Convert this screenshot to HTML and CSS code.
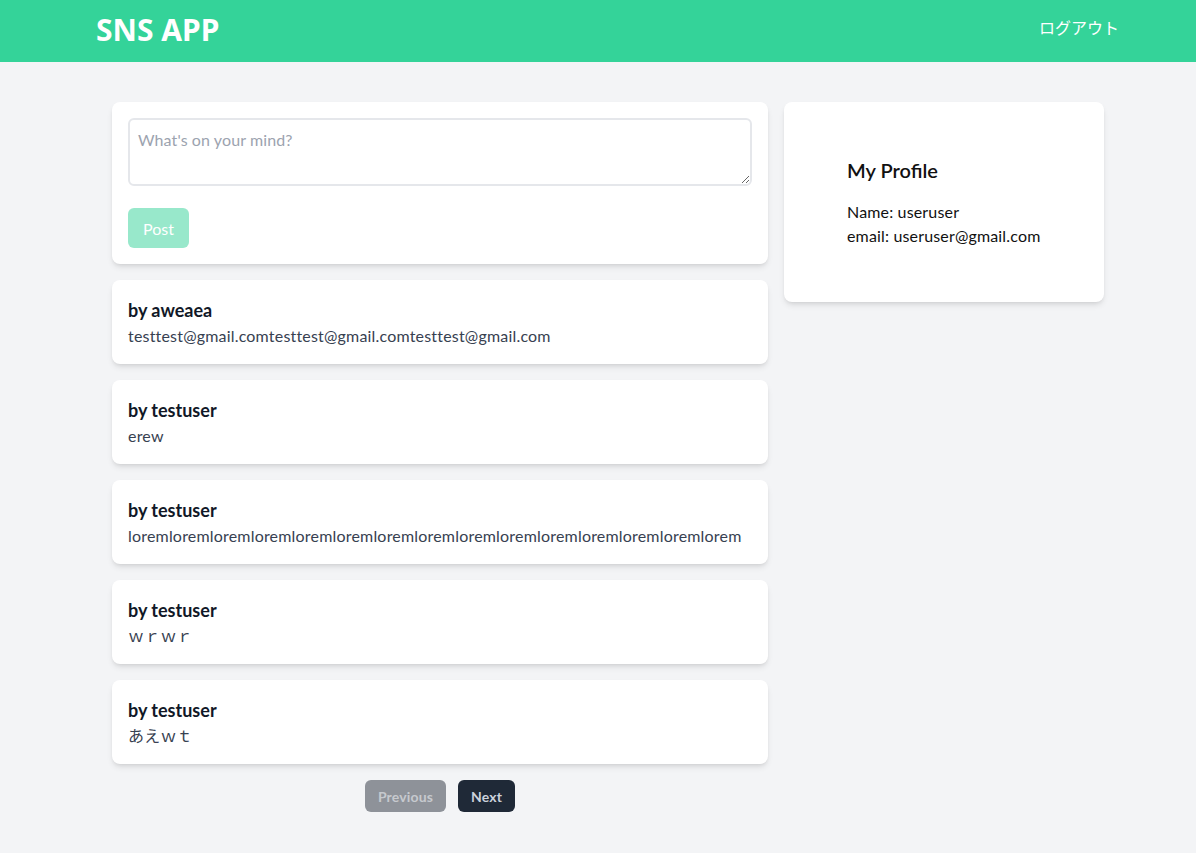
FILE: index.html
```html
<!DOCTYPE html>
<html lang="ja">
<head>
<meta charset="utf-8">
<title>SNS APP</title>
<link rel="stylesheet" href="styles.css">
</head>
<body>
<header class="topbar">
  <h1 class="brand">SNS APP</h1>
  <a class="logout" href="#">ログアウト</a>
</header>
<main class="layout">
  <section class="feed">
    <form class="card composer">
      <textarea class="composer-input" placeholder="What's on your mind?"></textarea>
      <button type="button" class="post-btn">Post</button>
    </form>
    <article class="card post">
      <h2 class="post-author">by aweaea</h2>
      <p class="post-body">testtest@gmail.comtesttest@gmail.comtesttest@gmail.com</p>
    </article>
    <article class="card post">
      <h2 class="post-author">by testuser</h2>
      <p class="post-body">erew</p>
    </article>
    <article class="card post">
      <h2 class="post-author">by testuser</h2>
      <p class="post-body">loremloremloremloremloremloremloremloremloremloremloremloremloremloremlorem</p>
    </article>
    <article class="card post">
      <h2 class="post-author">by testuser</h2>
      <p class="post-body">ｗｒｗｒ</p>
    </article>
    <article class="card post">
      <h2 class="post-author">by testuser</h2>
      <p class="post-body">あえｗｔ</p>
    </article>
    <nav class="pager">
      <button type="button" class="pager-btn prev">Previous</button>
      <button type="button" class="pager-btn next">Next</button>
    </nav>
  </section>
  <aside class="card profile">
    <h2 class="profile-title">My Profile</h2>
    <p class="profile-line">Name: useruser</p>
    <p class="profile-line">email: useruser@gmail.com</p>
  </aside>
</main>
</body>
</html>
```
FILE: styles.css
```css
* { box-sizing: border-box; }
body {
  margin: 0;
  background: #f3f4f6;
  font-family: "Segoe UI", Lato, "Noto Sans CJK JP", sans-serif;
  color: #111827;
  min-height: 853px;
}
.topbar {
  height: 62px;
  background: #34d399;
  display: flex;
  align-items: center;
  justify-content: space-between;
  padding: 0 77px 0 96px;
}
.brand {
  margin: 0;
  color: #fff;
  font-family: "Noto Sans", sans-serif;
  font-size: 30px;
  font-weight: 700;
  line-height: 36px;
  position: relative;
  top: -1px;
}
.logout {
  color: #fff;
  text-decoration: none;
  font-family: "Noto Sans CJK JP", sans-serif;
  font-size: 16px;
  position: relative;
  top: -4px;
}
.layout {
  display: grid;
  grid-template-columns: 656px 320px;
  gap: 16px;
  align-items: start;
  padding: 40px 0 0 112px;
}
.feed {
  display: flex;
  flex-direction: column;
  gap: 16px;
}
.card {
  background: #fff;
  border-radius: 8px;
  box-shadow: 0 4px 6px -1px rgba(0,0,0,0.1), 0 2px 4px -2px rgba(0,0,0,0.1);
}
.composer {
  padding: 16px;
  display: flex;
  flex-direction: column;
  align-items: flex-start;
  margin: 0;
  height: 162px;
}
.composer-input {
  display: block;
  width: 100%;
  height: 68px;
  border: 2px solid #e5e7eb;
  border-radius: 6px;
  padding: 8px;
  font-family: inherit;
  font-size: 16px;
  line-height: 24px;
  letter-spacing: 0.1px;
  color: #111827;
  resize: vertical;
  outline: none;
}
.composer-input::placeholder { color: #9ca3af; }
.post-btn {
  margin-top: 22px;
  height: 40px;
  padding: 0 15px;
  border: 0;
  border-radius: 6px;
  background: #34d399;
  opacity: 0.5;
  color: #fff;
  font-family: inherit;
  font-size: 16px;
}
.post {
  padding: 16px;
  height: 84px;
}
.post-author {
  margin: 0;
  font-size: 18px;
  line-height: 28px;
  font-weight: 700;
  color: #111827;
}
.post-body {
  margin: 0;
  font-size: 16px;
  line-height: 24px;
  letter-spacing: 0.19px;
  color: #374151;
}
.pager {
  display: flex;
  justify-content: center;
  gap: 12px;
}
.pager-btn {
  height: 32px;
  padding: 0 13px;
  border: 0;
  border-radius: 6px;
  font-family: inherit;
  font-size: 14px;
  font-weight: 700;
  letter-spacing: 0.15px;
}
.prev { background: #8e9299; color: #c6c9ce; }
.next { background: #1f2937; color: #cbd2dc; }
.profile {
  height: 200px;
  padding: 54px 16px 0 63px;
}
.profile-title {
  margin: 0 0 16px;
  font-size: 20px;
  line-height: 28px;
  font-weight: 600;
  color: #111;
}
.profile-line {
  margin: 0;
  font-size: 16px;
  line-height: 24px;
  letter-spacing: 0.16px;
  color: #111;
}
```
